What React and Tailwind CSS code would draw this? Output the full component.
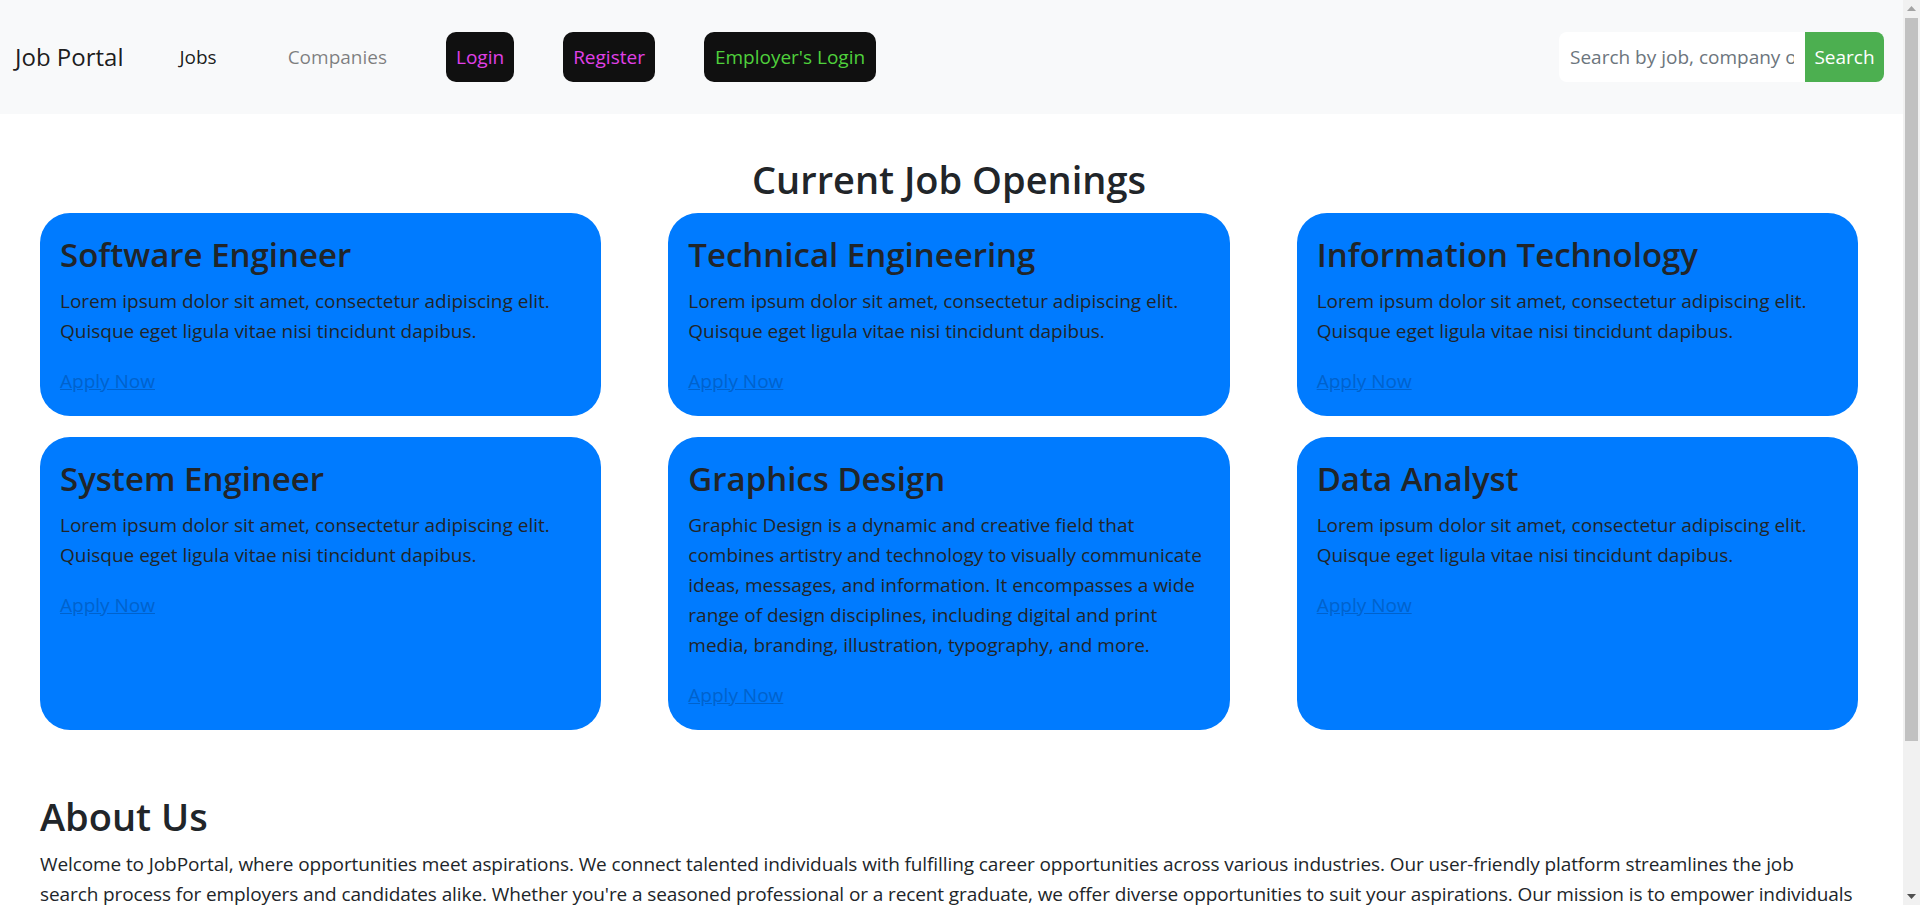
import React from 'react';

const lorem = 'Lorem ipsum dolor sit amet, consectetur adipiscing elit. Quisque eget ligula vitae nisi tincidunt dapibus.';

const jobs = [
  { title: 'Software Engineer', text: lorem },
  { title: 'Technical Engineering', text: lorem },
  { title: 'Information Technology', text: lorem },
  { title: 'System Engineer', text: lorem },
  {
    title: 'Graphics Design',
    text: 'Graphic Design is a dynamic and creative field that combines artistry and technology to visually communicate ideas, messages, and information. It encompasses a wide range of design disciplines, including digital and print media, branding, illustration, typography, and more.'
  },
  { title: 'Data Analyst', text: lorem }
];

function JobCard({ job }) {
  return (
    <div className="rounded-[30px] bg-[#007bff] p-[20px] text-[#212529]">
      <h3 className="mb-[10px] text-[33px] font-semibold leading-[43px]">{job.title}</h3>
      <p className="mb-[20px] text-[19px] leading-[30px]">{job.text}</p>
      <a href="#" className="text-[19px] leading-[30px] text-[#0062cc] underline">
        Apply Now
      </a>
    </div>
  );
}

// fake classic scrollbar, the reference shows one on the right edge
function Scrollbar() {
  return (
    <div className="flex w-[17px] shrink-0 flex-col bg-[#f1f1f1]">
      <div className="flex h-[17px] items-center justify-center">
        <svg width="9" height="5" viewBox="0 0 9 5">
          <path d="M0 5 L4.5 0 L9 5 Z" fill="#a3a3a3" />
        </svg>
      </div>
      <div className="flex-1 px-[2px] pt-[1px]">
        <div className="h-[723px] bg-[#c1c1c1]" />
      </div>
      <div className="flex h-[17px] items-center justify-center">
        <svg width="9" height="5" viewBox="0 0 9 5">
          <path d="M0 0 L9 0 L4.5 5 Z" fill="#505050" />
        </svg>
      </div>
    </div>
  );
}

export default function App() {
  return (
    <div className="flex h-screen overflow-hidden bg-white font-['Open_Sans',sans-serif] text-[#212529]">
      <div className="min-w-0 flex-1 overflow-hidden">
        <nav className="flex h-[114px] items-center bg-[#f8f9fa] pl-[15px] pr-[19px]">
          <a href="#" className="text-[24px] text-black/90">Job Portal</a>
          <a href="#" className="ml-[56px] text-[19px] text-black/90">Jobs</a>
          <a href="#" className="ml-[71px] text-[19px] text-black/50">Companies</a>
          <button className="ml-[59px] h-[50px] rounded-[10px] bg-[#101010] px-[10px] text-[19px] text-[#e040e8]">
            Login
          </button>
          <button className="ml-[49px] h-[50px] rounded-[10px] bg-[#101010] px-[10px] text-[19px] text-[#e040e8]">
            Register
          </button>
          <button className="ml-[49px] h-[50px] rounded-[10px] bg-[#101010] px-[11px] text-[19px] text-[#4fd03c]">
            Employer's Login
          </button>
          <form className="ml-auto flex h-[50px]" onSubmit={(e) => e.preventDefault()}>
            <input
              className="h-full w-[246px] rounded-l-[8px] bg-white px-[11px] text-[19px] text-[#495057] outline-none placeholder:text-[#6c757d]"
              placeholder="Search by job, company or location"
            />
            <button className="h-full w-[79px] rounded-r-[8px] bg-[#4caf50] text-[19px] text-white">
              Search
            </button>
          </form>
        </nav>

        <main className="pb-[150px] pl-[40px] pr-[45px]">
          <h2 className="mb-[10px] mt-[41px] text-center text-[38px] font-semibold leading-[48px]">
            Current Job Openings
          </h2>
          <div className="grid grid-cols-3 gap-x-[67px] gap-y-[21px]">
            {jobs.map((job) => (
              <JobCard key={job.title} job={job} />
            ))}
          </div>

          <section className="mt-[62px]">
            <h2 className="mb-[9px] text-[38px] font-semibold leading-[48px]">About Us</h2>
            <p className="text-[19px] leading-[30px] tracking-[-0.1px]">
              Welcome to JobPortal, where opportunities meet aspirations. We connect talented individuals with fulfilling
              career opportunities across various industries. Our user-friendly platform streamlines the job
              <br />
              search process for employers and candidates alike. Whether you're a seasoned professional or a recent
              graduate, we offer diverse opportunities to suit your aspirations. Our mission is to empower individuals to
              achieve their career goals and help businesses find the talent they need to grow.
            </p>
          </section>
        </main>
      </div>
      <Scrollbar />
    </div>
  );
}
